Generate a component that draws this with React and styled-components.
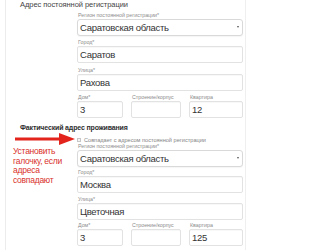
import React from 'react';
import styled, { createGlobalStyle } from 'styled-components';

const GlobalStyle = createGlobalStyle`
    * { box-sizing: border-box; }
    body {
        margin: 0;
        background: #ffffff;
        font-family: "Liberation Sans", Arial, sans-serif;
    }
`;

const Field = ({ label, value }) => (
    <StyledField>
        <StyledLabel>{label}</StyledLabel>
        <StyledInput>{value}</StyledInput>
    </StyledField>
);

const SelectField = ({ label, value }) => (
    <StyledField>
        <StyledLabel>{label}</StyledLabel>
        <StyledSelect>
            <span>{value}</span>
            <StyledCaret />
        </StyledSelect>
    </StyledField>
);

const HouseRow = ({ house, flat }) => (
    <StyledHouseRow>
        <Field label="Дом*" value={house} />
        <Field label="Строение/корпус" value="" />
        <Field label="Квартира" value={flat} />
    </StyledHouseRow>
);

const Arrow = () => (
    <StyledArrow width="64" height="12" viewBox="0 0 64 12">
        <rect x="2" y="4.5" width="46" height="3" fill="#e3241d" />
        <polygon points="46,0 62,6 46,12" fill="#e3241d" />
    </StyledArrow>
);

const App = () => {
    return (
        <>
            <GlobalStyle />
            <StyledPage>
                <StyledHeading>Адрес постоянной регистрации</StyledHeading>
                <StyledGrid>
                    <div />
                    <StyledFields $gap={3.5}>
                        <SelectField label="Регион постоянной регистрации*" value="Саратовская область" />
                        <Field label="Город*" value="Саратов" />
                        <Field label="Улица*" value="Рахова" />
                        <HouseRow house="3" flat="12" />
                    </StyledFields>
                </StyledGrid>

                <StyledHeading $bold>Фактический адрес проживания</StyledHeading>
                <StyledGrid $top={3.5}>
                    <StyledGutter>
                        <Arrow />
                        <StyledNote>
                            Установить<br />
                            галочку, если<br />
                            адреса<br />
                            совпадают
                        </StyledNote>
                    </StyledGutter>
                    <div>
                        <StyledCheckRow>
                            <StyledCheckbox />
                            <span>Совпадает с адресом постоянной регистрации</span>
                        </StyledCheckRow>
                        <StyledFields $gap={2.5}>
                            <SelectField label="Регион постоянной регистрации*" value="Саратовская область" />
                            <Field label="Город*" value="Москва" />
                            <Field label="Улица*" value="Цветочная" />
                            <HouseRow house="3" flat="125" />
                        </StyledFields>
                    </div>
                </StyledGrid>
            </StyledPage>
        </>
    );
};

const StyledPage = styled.div`
    margin-left: 5px;
    width: 241px;
    height: 250px;
    overflow: hidden;
    border-left: 1px solid #ececec;
    border-right: 1px solid #efefef;
    padding: 0 2px 0 7px;
`

const StyledHeading = styled.div`
    padding-left: 7px;
    height: 10px;
    line-height: 10px;
    font-size: ${p => (p.$bold ? '7px' : '7.5px')};
    font-weight: ${p => (p.$bold ? 700 : 400)};
    letter-spacing: ${p => (p.$bold ? '-0.15px' : '-0.05px')};
    color: ${p => (p.$bold ? '#2e2e2e' : '#444')};
    margin: ${p => (p.$bold ? '5px 0 0' : '0 0 1.5px')};
    white-space: nowrap;
`

const StyledGrid = styled.div`
    display: grid;
    grid-template-columns: 64px 1fr;
    margin-top: ${p => p.$top || 0}px;
`

const StyledFields = styled.div`
    display: flex;
    flex-direction: column;
    gap: ${p => p.$gap}px;
`

const StyledField = styled.div`
    display: flex;
    flex-direction: column;
    min-width: 0;
`

const StyledLabel = styled.div`
    height: 7px;
    line-height: 7px;
    font-size: 5.3px;
    color: #8c8c8c;
    padding-left: 1px;
    white-space: nowrap;
`

const StyledInput = styled.div`
    height: 17px;
    line-height: 15px;
    border: 1px solid #e2e2e2;
    border-radius: 2px;
    background: #fff;
    box-shadow: inset 0 1px 1px rgba(0, 0, 0, 0.03);
    padding-left: 2px;
    font-size: 9.5px;
    letter-spacing: -0.3px;
    color: #333;
    white-space: nowrap;
`

const StyledSelect = styled.div`
    height: 17px;
    display: flex;
    align-items: center;
    justify-content: space-between;
    border: 1px solid #d9d9d9;
    border-radius: 3px;
    background: #fff;
    box-shadow: 0 1px 1px rgba(0, 0, 0, 0.04);
    padding: 0 3px 0 2px;
    font-size: 9.5px;
    letter-spacing: -0.3px;
    color: #333;
    white-space: nowrap;
`

const StyledCaret = styled.span`
    width: 0;
    height: 0;
    border-left: 1.5px solid transparent;
    border-right: 1.5px solid transparent;
    border-top: 2.5px solid #555;
`

const StyledHouseRow = styled.div`
    display: grid;
    grid-template-columns: 46px 50px 1fr;
    column-gap: 8px;
`

const StyledGutter = styled.div`
    display: flex;
    flex-direction: column;
`

const StyledArrow = styled.svg`
    display: block;
    margin-top: -3.5px;
`

const StyledNote = styled.div`
    margin-top: 2px;
    font-size: 8.5px;
    line-height: 9.5px;
    letter-spacing: -0.25px;
    color: #d9322b;
    white-space: nowrap;
`

const StyledCheckRow = styled.div`
    display: flex;
    align-items: center;
    height: 6px;
    font-size: 5.6px;
    color: #858585;
    white-space: nowrap;
`

const StyledCheckbox = styled.span`
    width: 4px;
    height: 4px;
    border: 1px solid #c6c6c6;
    background: #f5f5f5;
    margin: 0 3px 0 0;
    flex: none;
`

export default App;
